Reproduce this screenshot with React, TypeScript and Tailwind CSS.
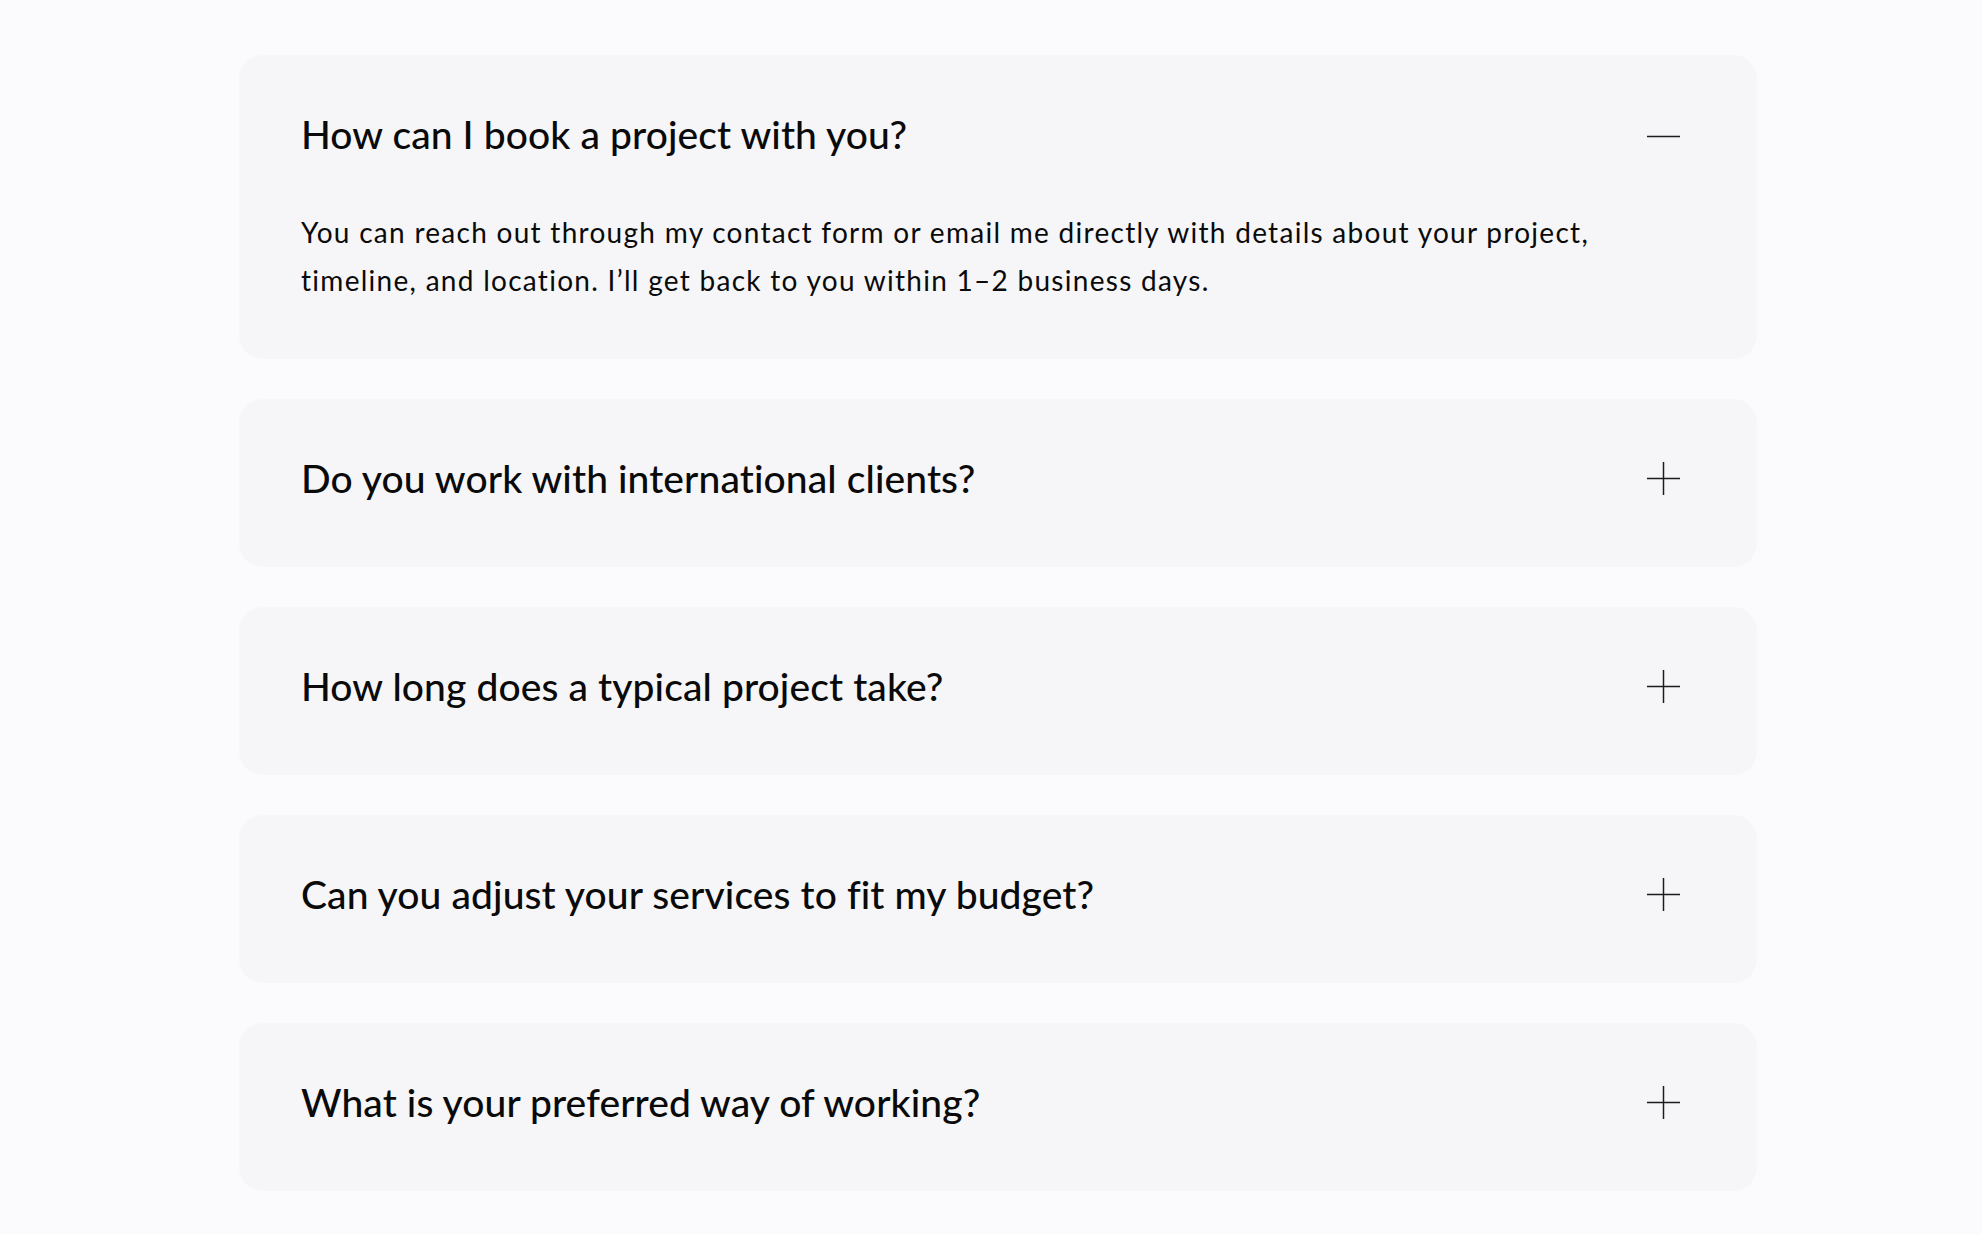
import { useState } from "react";

const faqs = [
  {
    q: "How can I book a project with you?",
    a: "You can reach out through my contact form or email me directly with details about your project, timeline, and location. I’ll get back to you within 1–2 business days.",
  },
  {
    q: "Do you work with international clients?",
    a: "Yes. I regularly work with clients abroad and handle everything remotely, from briefing to final delivery.",
  },
  {
    q: "How long does a typical project take?",
    a: "Most projects take between two and six weeks, depending on scope, revisions and scheduling.",
  },
  {
    q: "Can you adjust your services to fit my budget?",
    a: "Absolutely. Tell me what you have in mind and I’ll put together a package that works for you.",
  },
  {
    q: "What is your preferred way of working?",
    a: "Clear communication, a shared timeline and regular check-ins so you always know where things stand.",
  },
];

function ToggleIcon({ open }: { open: boolean }) {
  return (
    <svg
      width="33"
      height="33"
      viewBox="0 0 33 33"
      className={open ? "mr-[13px] mt-[5px] shrink-0" : "mr-[13px] shrink-0"}
      fill="none"
      stroke="#1c1c1e"
      strokeWidth="1.5"
    >
      <line x1="0" y1="16.5" x2="33" y2="16.5" />
      {!open && <line x1="16.5" y1="0" x2="16.5" y2="33" />}
    </svg>
  );
}

export default function App() {
  const [openIndex, setOpenIndex] = useState<number | null>(0);

  return (
    <div className="min-h-screen bg-[#fbfbfd] pt-[55px] pb-10 font-['Lato',sans-serif] text-[#0a0a0a]">
      <div className="ml-[239px] flex w-[1518px] flex-col gap-10">
        {faqs.map((item, i) => {
          const open = openIndex === i;
          return (
            <div
              key={item.q}
              className={
                open
                  ? "rounded-3xl bg-[#f6f6f8] pl-[62px] pr-16 pt-[59px] pb-[55px]"
                  : "rounded-3xl bg-[#f6f6f8] pl-[62px] pr-16 pt-[59px] pb-[69px]"
              }
            >
              <button
                type="button"
                onClick={() => setOpenIndex(open ? null : i)}
                className="flex w-full items-center justify-between text-left"
              >
                <span className="text-[39px] font-medium leading-[40px] tracking-[0.1px]">{item.q}</span>
                <ToggleIcon open={open} />
              </button>
              {open && (
                <p className="mt-[54px] max-w-[1340px] text-[28px] leading-[48px] tracking-[1.28px]">
                  {item.a}
                </p>
              )}
            </div>
          );
        })}
      </div>
    </div>
  );
}
